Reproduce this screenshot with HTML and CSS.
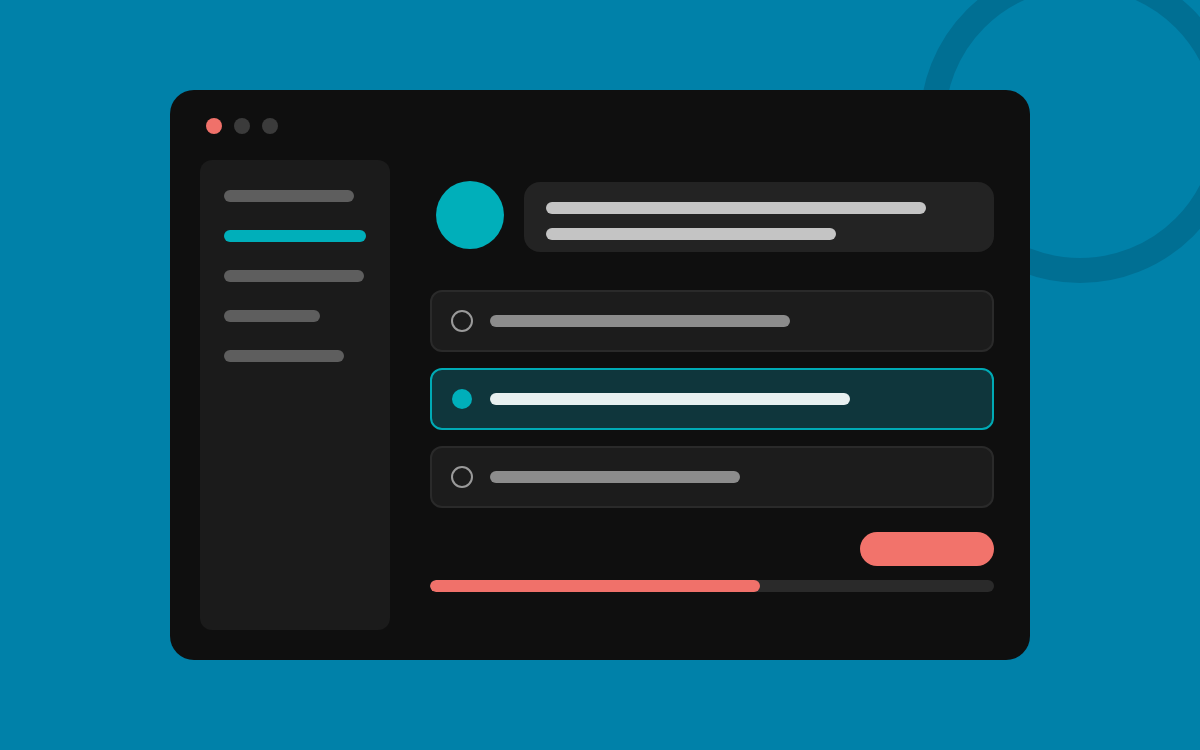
FILE: index.html
```html
<!DOCTYPE html>
<html lang="en">
<head>
<meta charset="utf-8">
<title>Quiz window</title>
<link rel="stylesheet" href="styles.css">
</head>
<body>
<div class="ring"></div>
<div class="window">
  <div class="dots">
    <span class="dot dot-red"></span>
    <span class="dot"></span>
    <span class="dot"></span>
  </div>
  <div class="body">
    <aside class="sidebar">
      <div class="nav-bar" style="width:130px"></div>
      <div class="nav-bar nav-active" style="width:142px"></div>
      <div class="nav-bar" style="width:140px"></div>
      <div class="nav-bar" style="width:96px"></div>
      <div class="nav-bar" style="width:120px"></div>
    </aside>
    <main class="main">
      <div class="header">
        <div class="avatar"></div>
        <div class="bubble">
          <div class="bubble-line" style="width:380px"></div>
          <div class="bubble-line" style="width:290px"></div>
        </div>
      </div>
      <div class="options">
        <div class="option">
          <span class="radio"></span>
          <span class="opt-line" style="width:300px"></span>
        </div>
        <div class="option option-selected">
          <span class="radio radio-on"></span>
          <span class="opt-line" style="width:360px"></span>
        </div>
        <div class="option">
          <span class="radio"></span>
          <span class="opt-line" style="width:250px"></span>
        </div>
      </div>
      <div class="actions">
        <div class="btn"></div>
      </div>
      <div class="progress"><div class="progress-fill" style="width:330px"></div></div>
    </main>
  </div>
</div>
</body>
</html>
```

FILE: styles.css
```css
* { box-sizing: border-box; }
html, body { margin: 0; height: 100%; }
body {
  background: #0081a9;
  font-family: "Liberation Sans", Arial, sans-serif;
  overflow: hidden;
  display: flex;
  align-items: center;
  justify-content: center;
  position: relative;
}
.ring {
  position: absolute;
  left: 920px;
  top: -37px;
  width: 320px;
  height: 320px;
  border-radius: 50%;
  border: 25px solid #006f93;
}
.window {
  position: relative;
  width: 860px;
  height: 570px;
  background: #0f0f0f;
  border-radius: 24px;
  padding: 28px 36px 30px 30px;
  display: flex;
  flex-direction: column;
}
.dots {
  display: flex;
  gap: 12px;
  margin-left: 6px;
  height: 16px;
}
.dot {
  width: 16px;
  height: 16px;
  border-radius: 50%;
  background: #3b3b3b;
}
.dot-red { background: #f0716a; }
.body {
  display: flex;
  gap: 40px;
  margin-top: 26px;
  flex: 1;
}
.sidebar {
  width: 190px;
  background: #1b1b1b;
  border-radius: 12px;
  padding: 30px 24px;
  display: flex;
  flex-direction: column;
  gap: 28px;
}
.nav-bar {
  height: 12px;
  border-radius: 6px;
  background: #5e5e5e;
  flex: none;
}
.nav-active { background: #00afba; }
.main {
  flex: 1;
  padding-top: 21px;
  display: flex;
  flex-direction: column;
}
.header {
  display: flex;
  align-items: flex-start;
  gap: 20px;
  padding-left: 6px;
}
.avatar {
  width: 68px;
  height: 68px;
  border-radius: 50%;
  background: #00afba;
  flex: none;
}
.bubble {
  flex: 1;
  margin-top: 1px;
  background: #232323;
  border-radius: 16px;
  padding: 20px 22px 12px;
  display: flex;
  flex-direction: column;
  gap: 14px;
}
.bubble-line {
  height: 12px;
  border-radius: 6px;
  background: #c4c4c4;
  flex: none;
}
.options {
  margin-top: 38px;
  display: flex;
  flex-direction: column;
  gap: 16px;
}
.option {
  height: 62px;
  border: 2px solid #2a2a2a;
  background: #1c1c1c;
  border-radius: 12px;
  display: flex;
  align-items: center;
  padding-left: 19px;
  gap: 17px;
}
.option-selected {
  border: 2.5px solid #00aab5;
  background: #0f363c;
  padding-left: 18.5px;
}
.radio {
  width: 22px;
  height: 22px;
  border-radius: 50%;
  border: 2.5px solid #9a9a9a;
  flex: none;
}
.radio-on {
  border: none;
  background: #00afba;
  width: 20px;
  height: 20px;
  margin-left: 1px;
  margin-right: 1px;
}
.opt-line {
  height: 12px;
  border-radius: 6px;
  background: #8c8c8c;
}
.option-selected .opt-line { background: #e8f0f0; }
.actions {
  margin-top: 24px;
  display: flex;
  justify-content: flex-end;
}
.btn {
  width: 134px;
  height: 34px;
  border-radius: 17px;
  background: #f2736b;
}
.progress {
  margin-top: 14px;
  height: 12px;
  border-radius: 6px;
  background: #2a2a2a;
  overflow: hidden;
}
.progress-fill {
  height: 100%;
  border-radius: 6px;
  background: #f0716a;
}
```
